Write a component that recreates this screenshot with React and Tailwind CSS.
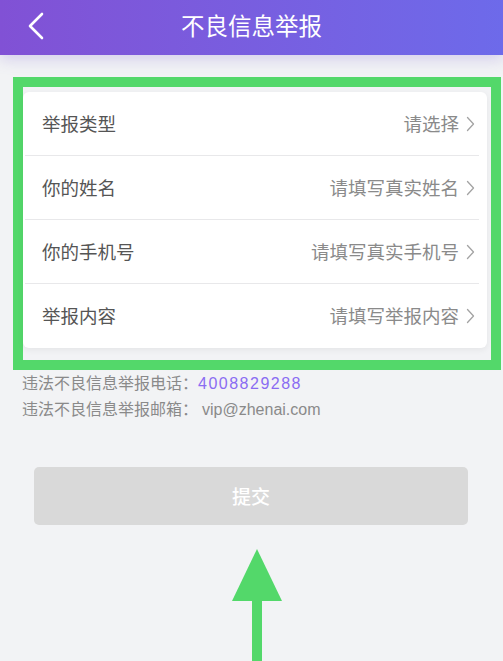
import React from 'react';

const rows = [
  { label: '举报类型', placeholder: '请选择' },
  { label: '你的姓名', placeholder: '请填写真实姓名' },
  { label: '你的手机号', placeholder: '请填写真实手机号' },
  { label: '举报内容', placeholder: '请填写举报内容' },
];

function Chevron() {
  return (
    <svg width="9" height="16" viewBox="0 0 9 16" className="ml-[7px] shrink-0">
      <path d="M1.5 1.5 L7.5 8 L1.5 14.5" fill="none" stroke="#a3a3a3" strokeWidth="1.3" strokeLinecap="round" strokeLinejoin="round" />
    </svg>
  );
}

export default function App() {
  return (
    <div
      className="min-h-[661px] w-[503px] overflow-hidden bg-[#f2f3f5]"
      style={{ fontFamily: '"Noto Sans CJK SC", "Noto Sans", sans-serif' }}
    >
      {/* 顶部导航 */}
      <div className="relative flex h-[55px] items-center justify-center bg-gradient-to-r from-[#8151d5] to-[#6d6aea] shadow-[0_4px_14px_rgba(120,90,210,0.25)]">
        <svg width="18" height="28" viewBox="0 0 18 28" className="absolute left-[27px] top-[12px]">
          <path d="M15 2 L3 14 L15 26" fill="none" stroke="#ffffff" strokeWidth="2.6" strokeLinecap="round" strokeLinejoin="round" />
        </svg>
        <h1 className="-mt-[4px] text-[23.5px] font-normal text-white">不良信息举报</h1>
      </div>

      {/* 表单卡片 (带标注框) */}
      <div className="ml-[13px] mt-[22px] w-[488px] border-[10px] border-[#53d86a] pt-[5px] pr-[4px] pb-[12px]">
        <div className="rounded-[6px] bg-white shadow-[0_2px_6px_rgba(0,0,0,0.06)]">
          {rows.map((row, i) => (
            <div key={row.label} className="pl-[2px] pr-[8px]">
              <div
                className={`flex h-[64px] items-center justify-between pl-[17px] pr-[4px] ${
                  i < rows.length - 1 ? 'border-b border-[#e8e8ea]' : ''
                }`}
              >
                <span className="text-[18.5px] text-[#555]">{row.label}</span>
                <span className="flex items-center text-[18.5px] text-[#8a8a8a]">
                  {row.placeholder}
                  <Chevron />
                </span>
              </div>
            </div>
          ))}
        </div>
      </div>

      {/* 联系方式 */}
      <div className="ml-[22px] text-[16px] leading-[25px] text-[#8a8a8a]">
        <p>
          违法不良信息举报电话：
          <span className="font-['Liberation_Sans',sans-serif] tracking-[1.5px] text-[#8a6cf2]">4008829288</span>
        </p>
        <p>
          违法不良信息举报邮箱：
          <span className="ml-[4px] font-['Liberation_Sans',sans-serif]">vip@zhenai.com</span>
        </p>
      </div>

      {/* 提交按钮 */}
      <div className="mx-[34px] mt-[45px] flex h-[58px] w-[434px] items-center justify-center rounded-[5px] bg-[#d9d9d9]">
        <span className="text-[19px] font-medium text-white">提交</span>
      </div>

      {/* 标注箭头 */}
      <svg width="52" height="112" viewBox="0 0 52 112" className="ml-[231px] mt-[24px] block">
        <polygon points="26,0 51,52 1,52" fill="#53d86a" />
        <rect x="21" y="51" width="10" height="61" fill="#53d86a" />
      </svg>
    </div>
  );
}
